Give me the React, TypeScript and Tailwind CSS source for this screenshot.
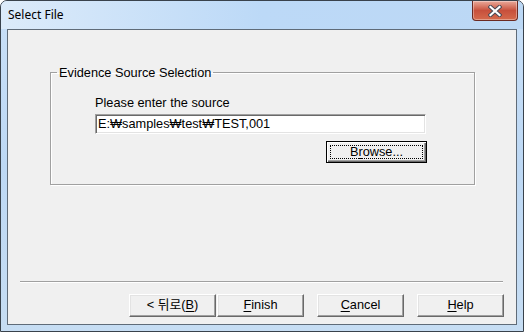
import React from 'react';

const uiFont = { fontFamily: '"Liberation Sans", "Noto Sans CJK KR", Arial, sans-serif' };

function Mnemonic({ text, index }: { text: string; index: number }) {
  return (
    <span>
      {text.slice(0, index)}
      <span className="underline underline-offset-2">{text[index]}</span>
      {text.slice(index + 1)}
    </span>
  );
}

function WinButton({ children, className = '' }: { children: React.ReactNode; className?: string }) {
  return (
    <button
      type="button"
      className={`h-[23px] w-[87px] bg-[#f0f0f0] border border-t-white border-l-white border-b-[#696969] border-r-[#696969] shadow-[inset_-1px_-1px_0_#a0a0a0,inset_1px_1px_0_#e3e3e3] text-[12.75px] text-black leading-none ${className}`}
    >
      {children}
    </button>
  );
}

function CloseButton() {
  return (
    <div className="h-[20px] w-[46px] rounded-b-[4px] border border-t-0 border-[#6b2a22] bg-gradient-to-b from-[#e9a99a] via-[#c7503c] to-[#d56a4c] flex items-center justify-center shadow-[inset_0_0_0_1px_rgba(255,255,255,0.35)]">
      <svg width="14" height="12" viewBox="0 0 14 12">
        <path d="M2.5 2 L11.5 10 M11.5 2 L2.5 10" stroke="#4a4a55" strokeWidth="4.2" strokeLinecap="square" />
        <path d="M2.5 2 L11.5 10 M11.5 2 L2.5 10" stroke="#ffffff" strokeWidth="2.2" strokeLinecap="square" />
      </svg>
    </div>
  );
}

export default function App() {
  return (
    <div className="w-[524px] h-[332px] bg-white" style={uiFont}>
      <div className="w-[524px] h-[332px] flex flex-col rounded-t-[7px] border border-[#39424c] bg-gradient-to-b from-[#c9e0f8] via-[#bdd8f4] to-[#c6ddf3]">
        {/* title bar */}
        <div className="h-[28px] flex justify-between pl-[7px] pr-[5px] bg-gradient-to-r from-[#dcebfa] via-[#bcd9f7] to-[#bcd8f5] rounded-t-[6px]">
          <span className="self-center text-[12px] text-black pb-[1px]" style={{ fontFamily: '"Noto Sans", "Liberation Sans", sans-serif' }}>
            Select File
          </span>
          <CloseButton />
        </div>

        {/* client area */}
        <div className="mx-[6px] h-[296px] bg-[#f0f0f0] border border-[#5f6b78] flex flex-col">
          <fieldset className="mt-[35px] ml-[42px] w-[425px] h-[120px] border border-[#a0a0a0] shadow-[1px_1px_0_#ffffff,inset_1px_1px_0_#ffffff] px-0 pb-[22px]">
            <legend className="ml-[6px] px-[2px] text-[12.75px] leading-[15px] text-black">Evidence Source Selection</legend>
            <div className="pl-[44px] pt-[15px] flex flex-col">
              <span className="text-[12.75px] leading-[15px] text-black">Please enter the source</span>
              <div className="mt-[4px] h-[20px] w-[331px] bg-white border border-t-[#a0a0a0] border-l-[#a0a0a0] border-b-white border-r-white shadow-[inset_1px_1px_0_#696969,inset_-1px_-1px_0_#e3e3e3] flex items-center pl-[2px] text-[12.75px] text-black">
                E:₩samples₩test₩TEST,001
              </div>
              <button
                type="button"
                className="mt-[7px] ml-[231px] h-[22px] w-[101px] bg-[#f0f0f0] border border-black shadow-[inset_1px_1px_0_#ffffff,inset_-1px_-1px_0_#696969,inset_-2px_-2px_0_#a0a0a0] p-[3px] text-[12.75px] text-black"
              >
                <span className="flex h-full w-full items-center justify-center border border-dotted border-black leading-none">
                  <Mnemonic text="Browse..." index={1} />
                </span>
              </button>
            </div>
          </fieldset>

          <div className="flex-1" />

          <div className="mx-[12px] mr-[13px] h-[2px] border-t border-[#a0a0a0] border-b border-b-white" />

          <div className="mt-[11px] mb-[7px] flex justify-end pr-[12px]">
            <WinButton>
              {'< 뒤로('}
              <span className="underline underline-offset-2">B</span>
              {')'}
            </WinButton>
            <WinButton className="ml-[1px]">
              <Mnemonic text="Finish" index={0} />
            </WinButton>
            <WinButton className="ml-[13px]">
              <Mnemonic text="Cancel" index={0} />
            </WinButton>
            <WinButton className="ml-[13px]">
              <Mnemonic text="Help" index={0} />
            </WinButton>
          </div>
        </div>
      </div>
    </div>
  );
}
